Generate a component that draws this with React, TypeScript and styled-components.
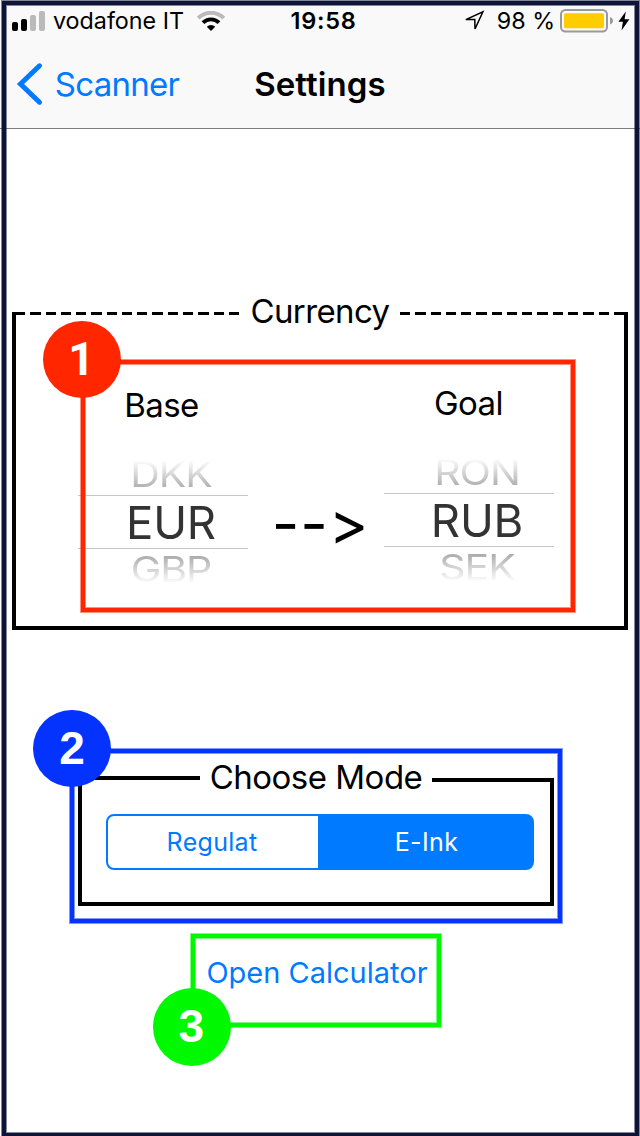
import React from "react";
import styled, { createGlobalStyle, css } from "styled-components";

const BLUE = "#007aff";

const GlobalStyle = createGlobalStyle`
  * { box-sizing: border-box; }
  body { margin: 0; background: #fff; }
`;

const Screen = styled.div`
  position: relative;
  width: 640px;
  height: 1136px;
  overflow: hidden;
  background: #fff;
  color: #000;
  font-family: Inter, "Liberation Sans", sans-serif;
  font-feature-settings: "calt" 0;
  display: flex;
  flex-direction: column;
`;

const Label = styled.span<{ $size: number; $width: number; $spacing?: number; $weight?: number; $color?: string }>`
  flex: none;
  display: flex;
  justify-content: center;
  width: ${(p) => p.$width}px;
  font-size: ${(p) => p.$size}px;
  line-height: 40px;
  font-weight: ${(p) => p.$weight ?? 400};
  letter-spacing: ${(p) => p.$spacing ?? 0}px;
  color: ${(p) => p.$color ?? "inherit"};
  white-space: pre;
`;

const Header = styled.header`
  height: 129px;
  background: #f9f9f9;
  border-bottom: 1px solid #7f7f7f;
`;

const StatusBar = styled.div`
  display: grid;
  grid-template-columns: 291px 65px 1fr;
  align-items: center;
  height: 41px;
`;

const StatusLeft = styled.div`
  display: flex;
  align-items: center;
  padding-left: 12px;
  gap: 8px;
`;

const StatusRight = styled.div`
  display: flex;
  align-items: center;
  padding-left: 108px;
`;

const StatusIcon = styled.svg<{ $gap?: number; $after?: number }>`
  flex: none;
  display: block;
  margin-left: ${(p) => p.$gap ?? 0}px;
  margin-right: ${(p) => p.$after ?? 0}px;
`;

const NavBar = styled.nav`
  display: flex;
  align-items: center;
  height: 86px;
  padding-left: 16px;
`;

const BackButton = styled.button`
  display: flex;
  align-items: center;
  gap: 12px;
  padding: 0;
  border: 0;
  background: none;
  font: inherit;
  color: ${BLUE};
  margin-right: 76px;
`;

const Main = styled.main`
  display: flex;
  flex-direction: column;
  padding-top: 162px;
`;

const CurrencyGroup = styled.section`
  width: 616px;
  height: 339px;
  margin-left: 12px;
  display: flex;
  flex-direction: column;
`;

const LegendRow = styled.div`
  display: flex;
  height: 40px;
  margin-bottom: -19px;
`;

const Dashes = styled.div<{ $width: number; $side: "left" | "right" }>`
  flex: none;
  width: ${(p) => p.$width}px;
  height: 3px;
  margin-top: 21px;
  background: repeating-linear-gradient(
    to right,
    #000 0 10.3px,
    transparent 10.3px 15.27px
  );
  ${(p) =>
    p.$side === "left"
      ? css`
          margin-left: 2.5px;
          margin-right: 12px;
        `
      : css`
          margin-left: 11px;
        `}
`;

const CurrencyBody = styled.div`
  flex: 1;
  border: 4px solid #000;
  border-top: 0;
  display: flex;
  padding-left: 62px;
`;

const PickerColumn = styled.div<{ $top: number }>`
  width: 170px;
  display: flex;
  flex-direction: column;
  align-items: center;
  padding-top: ${(p) => p.$top}px;
`;

const Heading = styled.div<{ $shift: number }>`
  height: 40px;
  margin-bottom: 30px;
  padding-right: ${(p) => p.$shift}px;
`;

const Wheel = styled.div`
  width: 170px;
  height: 136px;
  display: grid;
  grid-template-rows: 40px 54px 42px;
  mask-image: linear-gradient(transparent 5px, #000 36px, #000 99px, transparent 129px);
`;

const WheelItem = styled.div`
  display: flex;
  justify-content: center;
  align-items: flex-start;
  padding-left: 16px;
  color: #a6a6a6;
  & > span {
    transform: scaleY(0.87);
  }
  &:first-child {
    margin-top: -1px;
  }
`;

const WheelSelected = styled.div`
  display: flex;
  justify-content: center;
  align-items: center;
  padding: 2px 0 0 16px;
  border: solid #c6c6c6;
  border-width: 1px 0;
  color: #333;
`;

const ArrowText = styled.div`
  width: 136px;
  display: flex;
  justify-content: center;
  padding: 191px 0 0 9px;
`;

const ModeGroup = styled.section`
  width: 476px;
  margin: 127px 0 0 78px;
  height: 149px;
  display: flex;
  flex-direction: column;
`;

const ModeLegend = styled.div`
  display: flex;
  height: 40px;
  margin-bottom: -19px;
`;

const Rule = styled.div<{ $top: number }>`
  width: 122px;
  height: 4px;
  margin-top: ${(p) => p.$top}px;
  background: #000;
`;

const ModeBody = styled.div`
  flex: 1;
  border: 4px solid #000;
  border-top: 0;
  padding: 36px 16px 0 24px;
`;

const Segmented = styled.div`
  display: flex;
  width: 428px;
  height: 56px;
  border: 2px solid ${BLUE};
  border-radius: 8px;
  background: linear-gradient(to right, #fff 212px, ${BLUE} 212px) border-box;
`;

const Segment = styled.button<{ $active?: boolean }>`
  flex: ${(p) => (p.$active ? "1" : "0 0 208px")};
  display: flex;
  align-items: center;
  justify-content: center;
  padding: 0;
  border: 0;
  font: inherit;
  background: none;
  color: ${(p) => (p.$active ? "#fff" : BLUE)};
  & > span {
    margin-left: ${(p) => (p.$active ? 5 : 0)}px;
  }
`;

const LinkButton = styled.button`
  margin: 47px 0 0 207px;
  padding: 0;
  border: 0;
  background: none;
  font: inherit;
  color: ${BLUE};
  width: 220px;
`;

const Callout = styled.div<{ $x: number; $y: number; $w: number; $h: number; $color: string; $soft: string }>`
  position: absolute;
  left: ${(p) => p.$x}px;
  top: ${(p) => p.$y}px;
  width: ${(p) => p.$w}px;
  height: ${(p) => p.$h}px;
  border: 4px solid ${(p) => p.$color};
  box-shadow: 0 0 0 1px ${(p) => p.$soft}, inset 0 0 0 1px ${(p) => p.$soft};
  pointer-events: none;
`;

const Badge = styled.div<{ $x: number; $y: number; $color: string; $face?: string; $nudge?: number }>`
  position: absolute;
  left: ${(p) => p.$x}px;
  top: ${(p) => p.$y}px;
  width: 78px;
  height: 77.5px;
  border-radius: 50%;
  background: ${(p) => p.$color};
  color: #fff;
  display: flex;
  align-items: center;
  justify-content: center;
  padding-right: ${(p) => p.$nudge ?? 0}px;
  font: 700 46px/77px ${(p) => p.$face ?? '"Liberation Sans"'}, Arial, sans-serif;
`;

function Signal() {
  return (
    <StatusIcon width="33" height="20" viewBox="0 0 33 20">
      <rect x="0" y="11" width="6" height="9" rx="2" />
      <rect x="9" y="8" width="6" height="12" rx="2" />
      <rect x="18" y="4" width="6" height="16" rx="2" fill="#bababa" />
      <rect x="27" y="0" width="6" height="20" rx="2" fill="#bababa" />
    </StatusIcon>
  );
}

function Wifi() {
  return (
    <StatusIcon width="30" height="20" viewBox="0 0 30 20" $gap={4}>
      <path d="M2.2 7.2a17.8 17.8 0 0 1 25.6 0" fill="none" stroke="#bababa" strokeWidth="3.9" />
      <path d="M7 11.7a11.4 11.4 0 0 1 16 0" fill="none" stroke="#000" strokeWidth="3.9" />
      <path d="M15 20l-4.2-4.3a6 6 0 0 1 8.4 0z" />
    </StatusIcon>
  );
}

export default function App() {
  return (
    <Screen>
      <GlobalStyle />
      <Header>
        <StatusBar>
          <StatusLeft>
            <Signal />
            <Label $size={23.3} $width={131}>vodafone IT</Label>
            <Wifi />
          </StatusLeft>
          <Label $size={23.5} $width={65} $weight={600} $spacing={0.7}>19:58</Label>
          <StatusRight>
            <StatusIcon width="21" height="21" viewBox="0 0 21 21" $after={8}>
              <path d="M1.8 9.6L18.9 1.8 11 19l-.2-9.4z" fill="none" stroke="#000" strokeWidth="1.5" />
            </StatusIcon>
            <Label $size={23.3} $width={66}>98 %</Label>
            <StatusIcon width="54" height="24" viewBox="0 0 54 24" $gap={1}>
              <rect x="1" y="1" width="46" height="21.5" rx="4.5" fill="none" stroke="#999" strokeWidth="2" />
              <rect x="4" y="4.3" width="40" height="15" rx="1.5" fill="#fc0" />
              <path d="M50 8c4 1.5 4 6 0 7.5z" fill="#999" />
            </StatusIcon>
            <StatusIcon width="12" height="20" viewBox="0 0 12 20" $gap={4}>
              <path d="M7.8.5L.4 10.8h4.5L3.5 19.5 11.4 8.2H6.6z" />
            </StatusIcon>
          </StatusRight>
        </StatusBar>
        <NavBar>
          <BackButton>
            <StatusIcon width="28" height="44" viewBox="0 0 28 44">
              <path d="M23.5 3.8L4.5 22l19 18.2" fill="none" stroke={BLUE} strokeWidth="5" strokeLinecap="round" />
            </StatusIcon>
            <Label $size={33} $width={122} $spacing={-0.7}>Scanner</Label>
          </BackButton>
          <Label $size={33} $width={132} $weight={600} $spacing={0.1}>Settings</Label>
        </NavBar>
      </Header>

      <Main>
        <CurrencyGroup>
          <LegendRow>
            <Dashes $width={225} $side="left" />
            <Label $size={33} $width={137} $spacing={-0.6}>Currency</Label>
            <Dashes $width={227} $side="right" />
          </LegendRow>
          <CurrencyBody>
            <PickerColumn $top={73}>
              <Heading $shift={3}><Label $size={33} $width={72} $spacing={-0.6}>Base</Label></Heading>
              <Wheel>
                <WheelItem><Label $size={41} $width={79} $spacing={-1}>DKK</Label></WheelItem>
                <WheelSelected><Label $size={45.5} $width={84} $spacing={-0.2}>EUR</Label></WheelSelected>
                <WheelItem><Label $size={41} $width={78} $spacing={-1}>GBP</Label></WheelItem>
              </Wheel>
            </PickerColumn>
            <ArrowText><Label $size={60} $width={88} $weight={400} $spacing={0.8}>{"-->"}</Label></ArrowText>
            <PickerColumn $top={71}>
              <Heading $shift={1}><Label $size={33} $width={66} $spacing={-0.6}>Goal</Label></Heading>
              <Wheel>
                <WheelItem><Label $size={41} $width={83} $spacing={-1}>RON</Label></WheelItem>
                <WheelSelected><Label $size={45.5} $width={86} $spacing={-0.2}>RUB</Label></WheelSelected>
                <WheelItem><Label $size={41} $width={73} $spacing={-1}>SEK</Label></WheelItem>
              </Wheel>
            </PickerColumn>
          </CurrencyBody>
        </CurrencyGroup>

        <ModeGroup>
          <ModeLegend>
            <Rule $top={19} />
            <Label $size={33} $width={232} $spacing={-0.5}>Choose Mode</Label>
            <Rule $top={21} />
          </ModeLegend>
          <ModeBody>
            <Segmented>
              <Segment><Label $size={25} $width={90} $spacing={0.3}>Regulat</Label></Segment>
              <Segment $active><Label $size={25} $width={62} $spacing={0.4}>E-Ink</Label></Segment>
            </Segmented>
          </ModeBody>
        </ModeGroup>

        <LinkButton><Label $size={29} $width={220}>Open Calculator</Label></LinkButton>
      </Main>

      <Callout $x={2} $y={1} $w={637} $h={1136} $color="#0e1338" $soft="rgba(14,19,56,.5)" />
      <Callout $x={81} $y={360} $w={494} $h={252} $color="#ff2600" $soft="rgba(255,38,0,.5)" />
      <Callout $x={70} $y={749} $w={492} $h={174} $color="#0433ff" $soft="rgba(4,51,255,.5)" />
      <Callout $x={191} $y={934} $w={250} $h={93} $color="#00f900" $soft="rgba(0,249,0,.5)" />
      <Badge $x={43} $y={320.7} $color="#ff2600" $face="Roboto" $nudge={1}>1</Badge>
      <Badge $x={33} $y={709.5} $color="#0433ff">2</Badge>
      <Badge $x={153} $y={988} $color="#00f900" $nudge={1.5}>3</Badge>
    </Screen>
  );
}
